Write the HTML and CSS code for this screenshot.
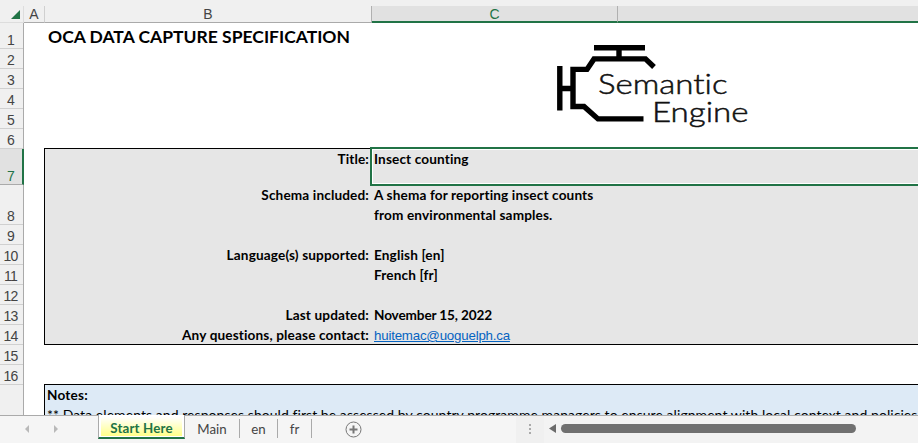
FILE: index.html
```html
<!DOCTYPE html>
<html lang="en">
<head>
<meta charset="utf-8">
<title>OCA Data Capture Specification</title>
<link rel="stylesheet" href="styles.css">
</head>
<body>
<div class="app">
  <header class="columns">
    <div class="corner"><svg width="9" height="9" viewBox="0 0 9 9"><path d="M9 0V9H0Z" fill="#217346"/></svg></div>
    <div class="col col-a">A</div>
    <div class="col col-b">B</div>
    <div class="col col-c selected">C</div>
    <div class="col col-d selected"></div>
  </header>
  <div class="body">
    <aside class="rows">
      <div class="row first">1</div><div class="row">2</div><div class="row">3</div><div class="row">4</div><div class="row">5</div><div class="row">6</div>
      <div class="row seven">7</div><div class="row eight">8</div><div class="row">9</div><div class="row">10</div><div class="row">11</div><div class="row">12</div><div class="row">13</div><div class="row">14</div><div class="row">15</div><div class="row">16</div>
    </aside>
    <main class="sheet">
      <div class="banner">
        <h1>OCA DATA CAPTURE SPECIFICATION</h1>
        <svg class="logo" width="200" height="90" viewBox="550 40 200 90">
          <g fill="none" stroke="#000" stroke-width="5.4">
            <path d="M594 47.7H645M619 48V58"/>
            <path d="M654 67L645.5 58.9H594L587 69.4H573V106.5H584L598 118.9H643.5"/>
            <path d="M559.8 66V110.500M560 88.500H573"/>
          </g>
          <g class="logo-text">
            <text x="598" y="93.500" textLength="129.500" lengthAdjust="spacingAndGlyphs">Semantic</text>
            <text x="652" y="121.500" textLength="96.500" lengthAdjust="spacingAndGlyphs">Engine</text>
          </g>
        </svg>
      </div>
      <section class="info">
        <div class="label">Title:</div><div class="value active">Insect counting</div>
        <div class="label">Schema included:</div><div class="value">A shema for reporting insect counts<br>from environmental samples.</div>
        <div class="label"></div><div class="value"></div>
        <div class="label">Language(s) supported:</div><div class="value">English [en]</div>
        <div class="label"></div><div class="value">French [fr]</div>
        <div class="label"></div><div class="value"></div>
        <div class="label">Last updated:</div><div class="value date">November 15, 2022</div>
        <div class="label">Any questions, please contact:</div><div class="value"><span class="mail">huitemac@uoguelph.ca</span></div>
      </section>
      <section class="notes">
        <div class="notes-title">Notes:</div>
        <div class="notes-line">** Data elements and responses should first be assessed by country programme managers to ensure alignment with local context and policies</div>
      </section>
    </main>
  </div>
  <footer class="tabs">
    <div class="nav"><svg width="34" height="8" viewBox="0 0 34 8" fill="#b9b9b9"><path d="M4 0V8L0 4ZM29 0V8L33 4Z"/></svg></div>
    <div class="tab current"><span>Start Here</span></div>
    <div class="tab main">Main</div>
    <div class="tab en">en</div>
    <div class="tab fr">fr</div>
    <svg class="add" width="17" height="17" viewBox="0 0 17 17" fill="none" stroke="#777"><circle cx="8.500" cy="8.500" r="7.500"/><path d="M4.500 8.500H12.500M8.500 4.500V12.500" stroke-width="2"/></svg>
    <div class="scroll">
      <div class="grip"><i></i><i></i><i></i></div>
      <svg class="arrow" width="7" height="9" viewBox="0 0 7 9"><path d="M7 0V9L0 4.500Z" fill="#6b6b6b"/></svg>
      <div class="thumb"></div>
    </div>
  </footer>
</div>
</body>
</html>
```
FILE: styles.css
```css
* { box-sizing: border-box; }
body { margin: 0; background: #fff; font-variant-ligatures: none; }
.app { width: 918px; height: 443px; overflow: hidden; display: flex; flex-direction: column; font-family: Lato, "Liberation Sans", sans-serif; color: #000; }

.columns { height: 23px; flex: none; display: flex; padding-top: 6px; background: #f0f0f0; font: 14px/17px "Liberation Sans", sans-serif; color: #444; text-align: center; }
.corner { width: 24px; border-right: 1px solid #ddd; border-bottom: 1px solid #ddd; display: flex; padding: 4px 0 0 11px; }
.col { border-bottom: 1px solid #aaa; border-right: 1px solid #d0d0d0; }
.col-a { width: 21px; }
.col-b { width: 327px; border-right-color: #b0b0b0; }
.col-c { width: 246px; border-right-color: #b0b0b0; }
.col-d { flex: 1; border-right: 0; }
.selected { background: #e1e1e1; border-bottom: 2px solid #217346; color: #217346; }

.body { height: 392px; flex: none; display: flex; overflow: hidden; }
.rows { width: 24px; flex: none; background: #f0f0f0; border-right: 1px solid #aaa; font: 14px/16px "Liberation Sans", sans-serif; color: #444; letter-spacing: -.8px; }
.row { height: 20px; display: flex; align-items: flex-end; justify-content: center; padding-right: 2px; border-bottom: 1px solid #d0d0d0; }
.first { height: 26px; }
.seven { height: 36px; width: 24px; padding-right: 1px; background: #e1e1e1; color: #217346; border-right: 2px solid #217346; border-bottom-color: #aaa; }
.eight { height: 40px; }

.sheet { flex: 1; min-width: 0; padding-left: 20px; }
.banner { height: 125px; position: relative; }
h1 { margin: 0; padding: 3px 0 0 4px; font-size: 17.500px; line-height: 22px; font-weight: 700; white-space: nowrap; }
.logo { position: absolute; left: 506px; top: 17px; }
.logo-text { font: 300 28px Lato, sans-serif; font-variant-ligatures: none; fill: #111; stroke: #111; stroke-width: .5px; }

.info { display: grid; grid-template-columns: 326px 1fr; grid-template-rows: 36px 40px repeat(6, 20px); height: 197px; background: #e6e6e6; border: 1px solid #000; border-right: 0; font-size: 13.600px; letter-spacing: .14px; line-height: 20px; font-weight: 700; white-space: nowrap; }
.label { text-align: right; padding-right: 2px; }
.value { padding-left: 3px; }
.date { letter-spacing: -.13px; }
.active { position: relative; margin: -2px 0 -1px -1px; padding: 1px 0 0 2px; line-height: 18px; border: 2px solid #217346; border-right: 0; box-shadow: inset 1px 1px #fff, inset 0 -1px #fff; }
.mail { font: 13.300px "Liberation Sans", sans-serif; letter-spacing: -.2px; color: #0563c1; text-decoration: underline; }

.notes { margin-top: 39px; height: 31px; overflow: hidden; background: #ddeaf6; border: 1px solid #000; border-right: 0; border-bottom: 0; padding-left: 2px; line-height: 20px; font-size: 14px; letter-spacing: .06px; white-space: nowrap; }
.notes-title { font-size: 13.600px; letter-spacing: .2px; font-weight: 700; }

.tabs { height: 28px; flex: none; display: flex; border-top: 1px solid #aaa; background: #f5f5f5; color: #444; font-size: 13.300px; }
.nav { width: 98px; padding: 9px 0 0 25px; line-height: 0; }
.tab { height: 19px; margin-top: 3px; line-height: 20px; text-align: center; border-right: 1px solid #aaa; white-space: nowrap; }
.current { width: 87px; height: 24px; margin-top: -1px; padding: 2px 2px 0; background: #fff; border-left: 1px solid #aaa; border-bottom: 2px solid #217346; color: #217346; font-weight: 700; letter-spacing: .15px; }
.current span { display: block; height: 19px; line-height: 23px; margin-bottom: 1px; background: linear-gradient(#fff, #ffff88); }
.main { width: 55px; }
.en { width: 38px; }
.fr { width: 34px; }
.add { margin: 5px 0 0 33px; }
.scroll { margin-left: auto; width: 402px; display: flex; background: #f3f3f3; }
.grip { width: 28px; background: #f0f0f0; display: flex; flex-direction: column; align-items: center; gap: 2px; padding-top: 8px; }
.grip i { width: 2px; height: 2px; background: #aaa; }
.arrow { margin: 8px 0 0 5px; }
.thumb { width: 295px; height: 9px; margin: 8px 0 0 5px; border-radius: 5px; background: #707070; }
```
